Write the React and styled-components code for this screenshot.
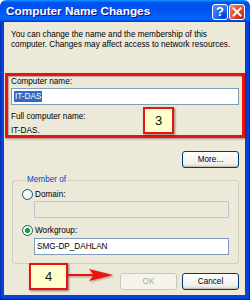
import React from "react"
import styled, { createGlobalStyle } from "styled-components"

const GlobalStyle = createGlobalStyle`
  html, body {
    margin: 0;
    padding: 0;
    width: 250px;
    height: 300px;
    overflow: hidden;
    background: #fff;
  }
  * { box-sizing: border-box; }
`

const App = () => {
  return (
    <>
      <GlobalStyle />
      <Window>
        <TitleBar>
          <Title>Computer Name Changes</Title>
          <Controls>
            <HelpButton>?</HelpButton>
            <CloseButton>
              <svg width="10" height="10" viewBox="0 0 10 10">
                <path d="M1.5 1.5 L8.5 8.5 M8.5 1.5 L1.5 8.5" stroke="#fff" strokeWidth="2" strokeLinecap="square" />
              </svg>
            </CloseButton>
          </Controls>
        </TitleBar>
        <Frame>
          <Body>
            <Intro>
              You can change the name and the membership of this
              <br />
              computer. Changes may affect access to network resources.
            </Intro>

            <Label $top={27}>Computer name:</Label>
            <TextBox $mt={1}>
              <Selected>IT-DAS</Selected>
            </TextBox>

            <Label $top={7}>Full computer name:</Label>
            <Label $top={4}>IT-DAS.</Label>

            <ButtonRow $mt={15}>
              <Button>More...</Button>
            </ButtonRow>

            <Group>
              <Legend>Member of</Legend>
              <RadioRow>
                <Radio />
                <RadioLabel>Domain:</RadioLabel>
              </RadioRow>
              <TextBox $mt={1} $indent disabled />
              <RadioRow $mt={7}>
                <Radio $checked />
                <RadioLabel>Workgroup:</RadioLabel>
              </RadioRow>
              <TextBox $mt={2} $indent>SMG-DP_DAHLAN</TextBox>
            </Group>

            <ButtonRow $mt={9}>
              <Button disabled>OK</Button>
              <Button>Cancel</Button>
            </ButtonRow>
          </Body>
        </Frame>

        <Highlight />
        <Callout $left={143} $top={107} $w={31} $h={27}>3</Callout>
        <Callout $left={29} $top={263} $w={39} $h={27}>4</Callout>
        <Arrow width="48" height="16" viewBox="0 0 48 16">
          <path d="M0 7 L26 7 L22 2 L46 8 L22 14 L26 9 L0 9 Z" fill="#e8140f" />
        </Arrow>
      </Window>
    </>
  )
}

const Window = styled.div`
  position: relative;
  width: 250px;
  height: 300px;
  display: flex;
  flex-direction: column;
  font-family: "Liberation Sans", Arial, sans-serif;
`

const TitleBar = styled.div`
  height: 22px;
  flex: none;
  display: flex;
  align-items: center;
  justify-content: space-between;
  padding: 0 5px 0 6px;
  border-radius: 6px 6px 0 0;
  background: linear-gradient(
    180deg,
    #0997ff,
    #0053ee 12%,
    #0050ee 40%,
    #0066ff 85%,
    #005bff 92%,
    #003dd7 96%,
    #003dd7
  );
`

const Title = styled.span`
  color: #fff;
  font-weight: bold;
  font-size: 11.8px;
  text-shadow: 1px 1px #0f1089;
`

const Controls = styled.div`
  display: flex;
  gap: 1px;
  margin-top: 1px;
`

const CtrlButton = styled.div`
  width: 16px;
  height: 16px;
  border: 1px solid #fff;
  border-radius: 3px;
  display: flex;
  align-items: center;
  justify-content: center;
  color: #fff;
`

const HelpButton = styled(CtrlButton)`
  background: radial-gradient(circle at 80% 85%, #0040c0, #2e6ff5 55%, #5a93ff);
  font-weight: bold;
  font-size: 13px;
  line-height: 1;
`

const CloseButton = styled(CtrlButton)`
  background: radial-gradient(circle at 80% 85%, #b8290e, #e1552f 55%, #f08a6a);
`

const Frame = styled.div`
  flex: 1;
  display: flex;
  min-height: 0;
  background: #0841d6;
  padding: 0 4px 4px 3px;
  border-left: 1px solid #0030b8;
  border-right: 1px solid #001ea0;
  border-bottom: 1px solid #001ea0;
`

const Body = styled.div`
  flex: 1;
  min-width: 0;
  overflow: hidden;
  background: #ece9d8;
  padding: 8px 6px 0 7px;
  display: flex;
  flex-direction: column;
  font-size: 8.2px;
  color: #000;
`

const Intro = styled.div`
  line-height: 10px;
  white-space: nowrap;
`

const Label = styled.div`
  margin-top: ${p => p.$top}px;
  line-height: 10px;
`

const TextBox = styled.div`
  margin-top: ${p => p.$mt}px;
  margin-left: ${p => (p.$indent ? "12px" : "0")};
  height: 17px;
  border: 1px solid ${p => (p.disabled ? "#b7c6d8" : "#7f9db9")};
  background: ${p => (p.disabled ? "#ece9d8" : "#fff")};
  display: flex;
  align-items: center;
  padding: 0 2px;
`

const Selected = styled.span`
  background: #316ac5;
  color: #fff;
  line-height: 11px;
  padding: 0 1px;
`

const ButtonRow = styled.div`
  margin-top: ${p => p.$mt}px;
  display: flex;
  justify-content: flex-end;
  gap: 5px;
`

const Button = styled.button`
  width: 57px;
  height: 17px;
  padding: 0;
  font-family: inherit;
  font-size: 8.2px;
  border-radius: 3px;
  border: 1px solid ${p => (p.disabled ? "#c9c7ba" : "#003c74")};
  color: ${p => (p.disabled ? "#aca899" : "#000")};
  background: ${p =>
    p.disabled
      ? "#f5f4ea"
      : "linear-gradient(180deg, #fff, #f0efea 80%, #d6d0c5)"};
  box-shadow: ${p => (p.disabled ? "none" : "inset 0 -1px #c7c1b4")};
`

const Group = styled.fieldset`
  margin: 7px 0 0 1px;
  padding: 4px 9px 8px 9px;
  border: 1px solid #d0d0bf;
  border-radius: 3px;
  min-width: 0;
`

const Legend = styled.legend`
  color: #0046d5;
  padding: 0 1px;
  margin-left: 4px;
  line-height: 10px;
`

const RadioRow = styled.div`
  margin-top: ${p => p.$mt || 0}px;
  display: flex;
  align-items: center;
  gap: 2px;
  height: 11px;
`

const Radio = styled.span`
  width: 11px;
  height: 11px;
  border-radius: 50%;
  border: 1px solid #1c5180;
  background: ${p =>
    p.$checked
      ? "radial-gradient(circle, #21a121 0 2.2px, #d0e8d0 2.8px, #fff 3.4px, #e6e6df)"
      : "radial-gradient(circle at 40% 40%, #fff, #e6e6df)"};
`

const RadioLabel = styled.span`
  line-height: 10px;
`

const Highlight = styled.div`
  position: absolute;
  left: 5px;
  top: 73px;
  width: 240px;
  height: 65px;
  border: 3px solid #e8140f;
  box-shadow: 1px 1px 2px rgba(80, 0, 0, 0.45), inset 1px 1px 1px rgba(80, 0, 0, 0.3);
  pointer-events: none;
`

const Callout = styled.div`
  position: absolute;
  left: ${p => p.$left}px;
  top: ${p => p.$top}px;
  width: ${p => p.$w}px;
  height: ${p => p.$h}px;
  background: #ffffcc;
  border: 2px solid #e8140f;
  box-shadow: 1px 1px 2px rgba(80, 0, 0, 0.5);
  display: flex;
  align-items: center;
  justify-content: center;
  font-size: 13px;
  color: #111;
`

const Arrow = styled.svg`
  position: absolute;
  left: 67px;
  top: 267px;
  filter: drop-shadow(1px 1px 1px rgba(80, 0, 0, 0.4));
`

export default App
